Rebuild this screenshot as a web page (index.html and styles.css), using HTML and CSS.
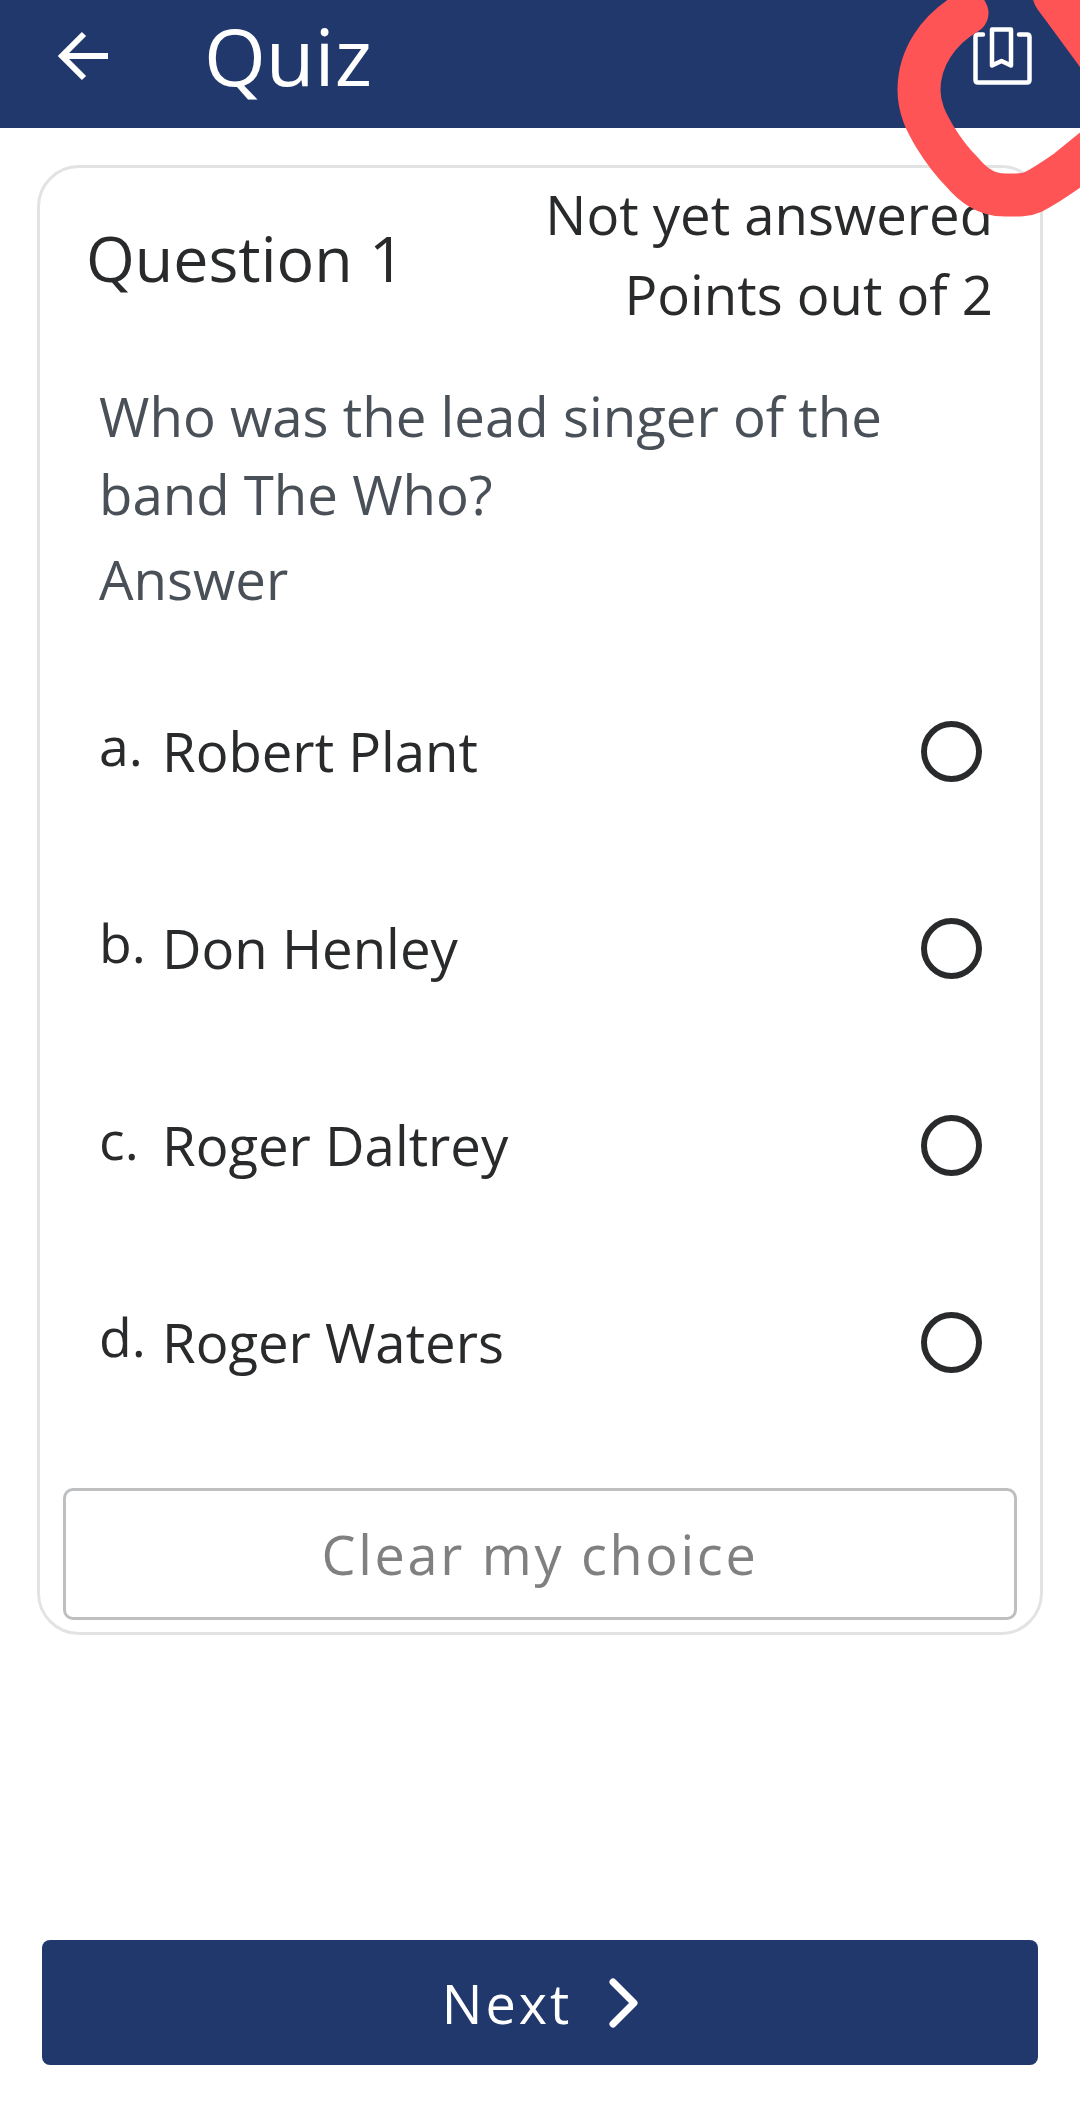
FILE: index.html
```html
<!DOCTYPE html>
<html lang="en">
<head>
  <meta charset="UTF-8">
  <meta name="viewport" content="width=device-width, initial-scale=1.0">
  <title>Quiz</title>
  <link rel="stylesheet" href="styles.css">
</head>
<body>

  <header class="app-bar">
    <svg class="back-icon" width="50" height="50" viewBox="0 0 50 50" fill="none" stroke="#fff" stroke-width="6">
      <path d="M50 25H5M26 3L4 25L26 47"/>
    </svg>
    <h1 class="app-title">Quiz</h1>
    <svg class="book-icon" width="60" height="60" viewBox="0 0 60 60" fill="none" stroke="#fff" stroke-width="4.500" stroke-linejoin="round" stroke-linecap="round">
      <path d="M11 8.500H6Q3.500 8.500 3.500 11V54Q3.500 56.500 6 56.500H55Q57.500 56.500 57.500 54V11Q57.500 8.500 55 8.500H47"/>
      <path d="M20 3.500H39V39.500L29.500 35L20 39.500Z"/>
    </svg>
  </header>

  <main class="card">
    <div class="card-head">
      <div class="question-no">Question 1</div>
      <div class="question-state">
        <div>Not yet answered</div>
        <div>Points out of 2</div>
      </div>
    </div>

    <p class="question-text">Who was the lead singer of the band The Who?</p>
    <div class="answer-label">Answer</div>

    <div class="options">
      <div class="option">
        <span class="option-letter">a.</span>
        <span class="option-text">Robert Plant</span>
        <span class="radio"></span>
      </div>
      <div class="option">
        <span class="option-letter">b.</span>
        <span class="option-text">Don Henley</span>
        <span class="radio"></span>
      </div>
      <div class="option">
        <span class="option-letter">c.</span>
        <span class="option-text">Roger Daltrey</span>
        <span class="radio"></span>
      </div>
      <div class="option">
        <span class="option-letter">d.</span>
        <span class="option-text">Roger Waters</span>
        <span class="radio"></span>
      </div>
    </div>

    <button class="clear-btn">Clear my choice</button>
  </main>

  <button class="next-btn">
    Next
    <svg width="30" height="50" viewBox="0 0 30 50" fill="none" stroke="#fff" stroke-width="7" stroke-linecap="round" stroke-linejoin="round">
      <path d="M5 4L26 25L5 46"/>
    </svg>
  </button>

  <!-- red marker scribble on top of the screenshot -->
  <svg class="scribble" width="300" height="240" viewBox="780 0 300 240" fill="none" stroke="#fe5456" stroke-linecap="round" stroke-linejoin="round">
    <path stroke-width="43" d="M967 13C938 30 919 58 919 90C919 108 926 122 935 137C943 150 952 162 962 172C968 179 973 184 980 188C988 193 996 195 1005 195C1014 195 1024 196 1033 192C1045 186 1058 177 1068 170L1095 148"/>
    <path stroke-width="60" d="M1062 -8L1071 4L1104 49"/>
  </svg>

</body>
</html>
```

FILE: styles.css
```css
body {
  margin: 0;
  width: 1080px;
  height: 2114px;
  position: relative;
  overflow: hidden;
  display: flex;
  flex-direction: column;
  font-family: "Open Sans", sans-serif;
  background: #fff;
  color: #282a2c;
}

.app-bar {
  height: 128px;
  flex: none;
  display: flex;
  align-items: center;
  background: #21386d;
  color: #fff;
}

.back-icon {
  margin-left: 58px;
  margin-top: -16px;
}

.app-title {
  margin: -16px 0 0 96px;
  font-size: 79.500px;
  font-weight: 400;
  line-height: 1;
}

.book-icon {
  margin-left: auto;
  margin-right: 48px;
  margin-top: -16px;
}

.card {
  margin: 37px 37px 0;
  height: 1470px;
  box-sizing: border-box;
  padding: 0 23px;
  display: flex;
  flex-direction: column;
  border: 3px solid #e1e3e5;
  border-radius: 42px;
}

.card-head {
  display: flex;
  justify-content: space-between;
  align-items: center;
  padding: 6px 24px 0 23px;
}

.question-no {
  margin-top: 7px;
  font-size: 62.700px;
}

.question-state {
  text-align: right;
  font-size: 54.500px;
  line-height: 80px;
}

.question-text {
  margin: 43px 0 0 36px;
  width: 850px;
  font-size: 54.600px;
  line-height: 78px;
  color: #495057;
}

.answer-label {
  margin: 7px 0 0 36px;
  font-size: 54.600px;
  line-height: 78px;
  color: #495057;
}

.options {
  margin-top: 34px;
  display: flex;
  flex-direction: column;
}

.option {
  height: 197px;
  display: flex;
  align-items: center;
  padding: 0 35px 0 36px;
}

.option-letter {
  width: 63px;
  font-size: 53.500px;
  margin-top: -10px;
}

.option-text {
  flex: 1;
  font-size: 54.500px;
}

.radio {
  width: 61px;
  height: 61px;
  box-sizing: border-box;
  margin-top: 2px;
  margin-right: 0.500px;
  border: 6px solid #282a2c;
  border-radius: 50%;
}

.clear-btn {
  margin-top: auto;
  margin-bottom: 12px;
  height: 132px;
  flex: none;
  font-family: inherit;
  font-size: 54px;
  letter-spacing: 2.700px;
  color: #808080;
  background: #fff;
  border: 3px solid #bdbfc1;
  border-radius: 10px;
}

.next-btn {
  margin: auto 42px 49px;
  height: 125px;
  flex: none;
  display: flex;
  justify-content: center;
  align-items: center;
  gap: 36px;
  font-family: inherit;
  font-size: 54px;
  letter-spacing: 3px;
  color: #fff;
  background: #21386d;
  border: none;
  border-radius: 8px;
}

.scribble {
  position: absolute;
  top: 0;
  left: 780px;
}
```
